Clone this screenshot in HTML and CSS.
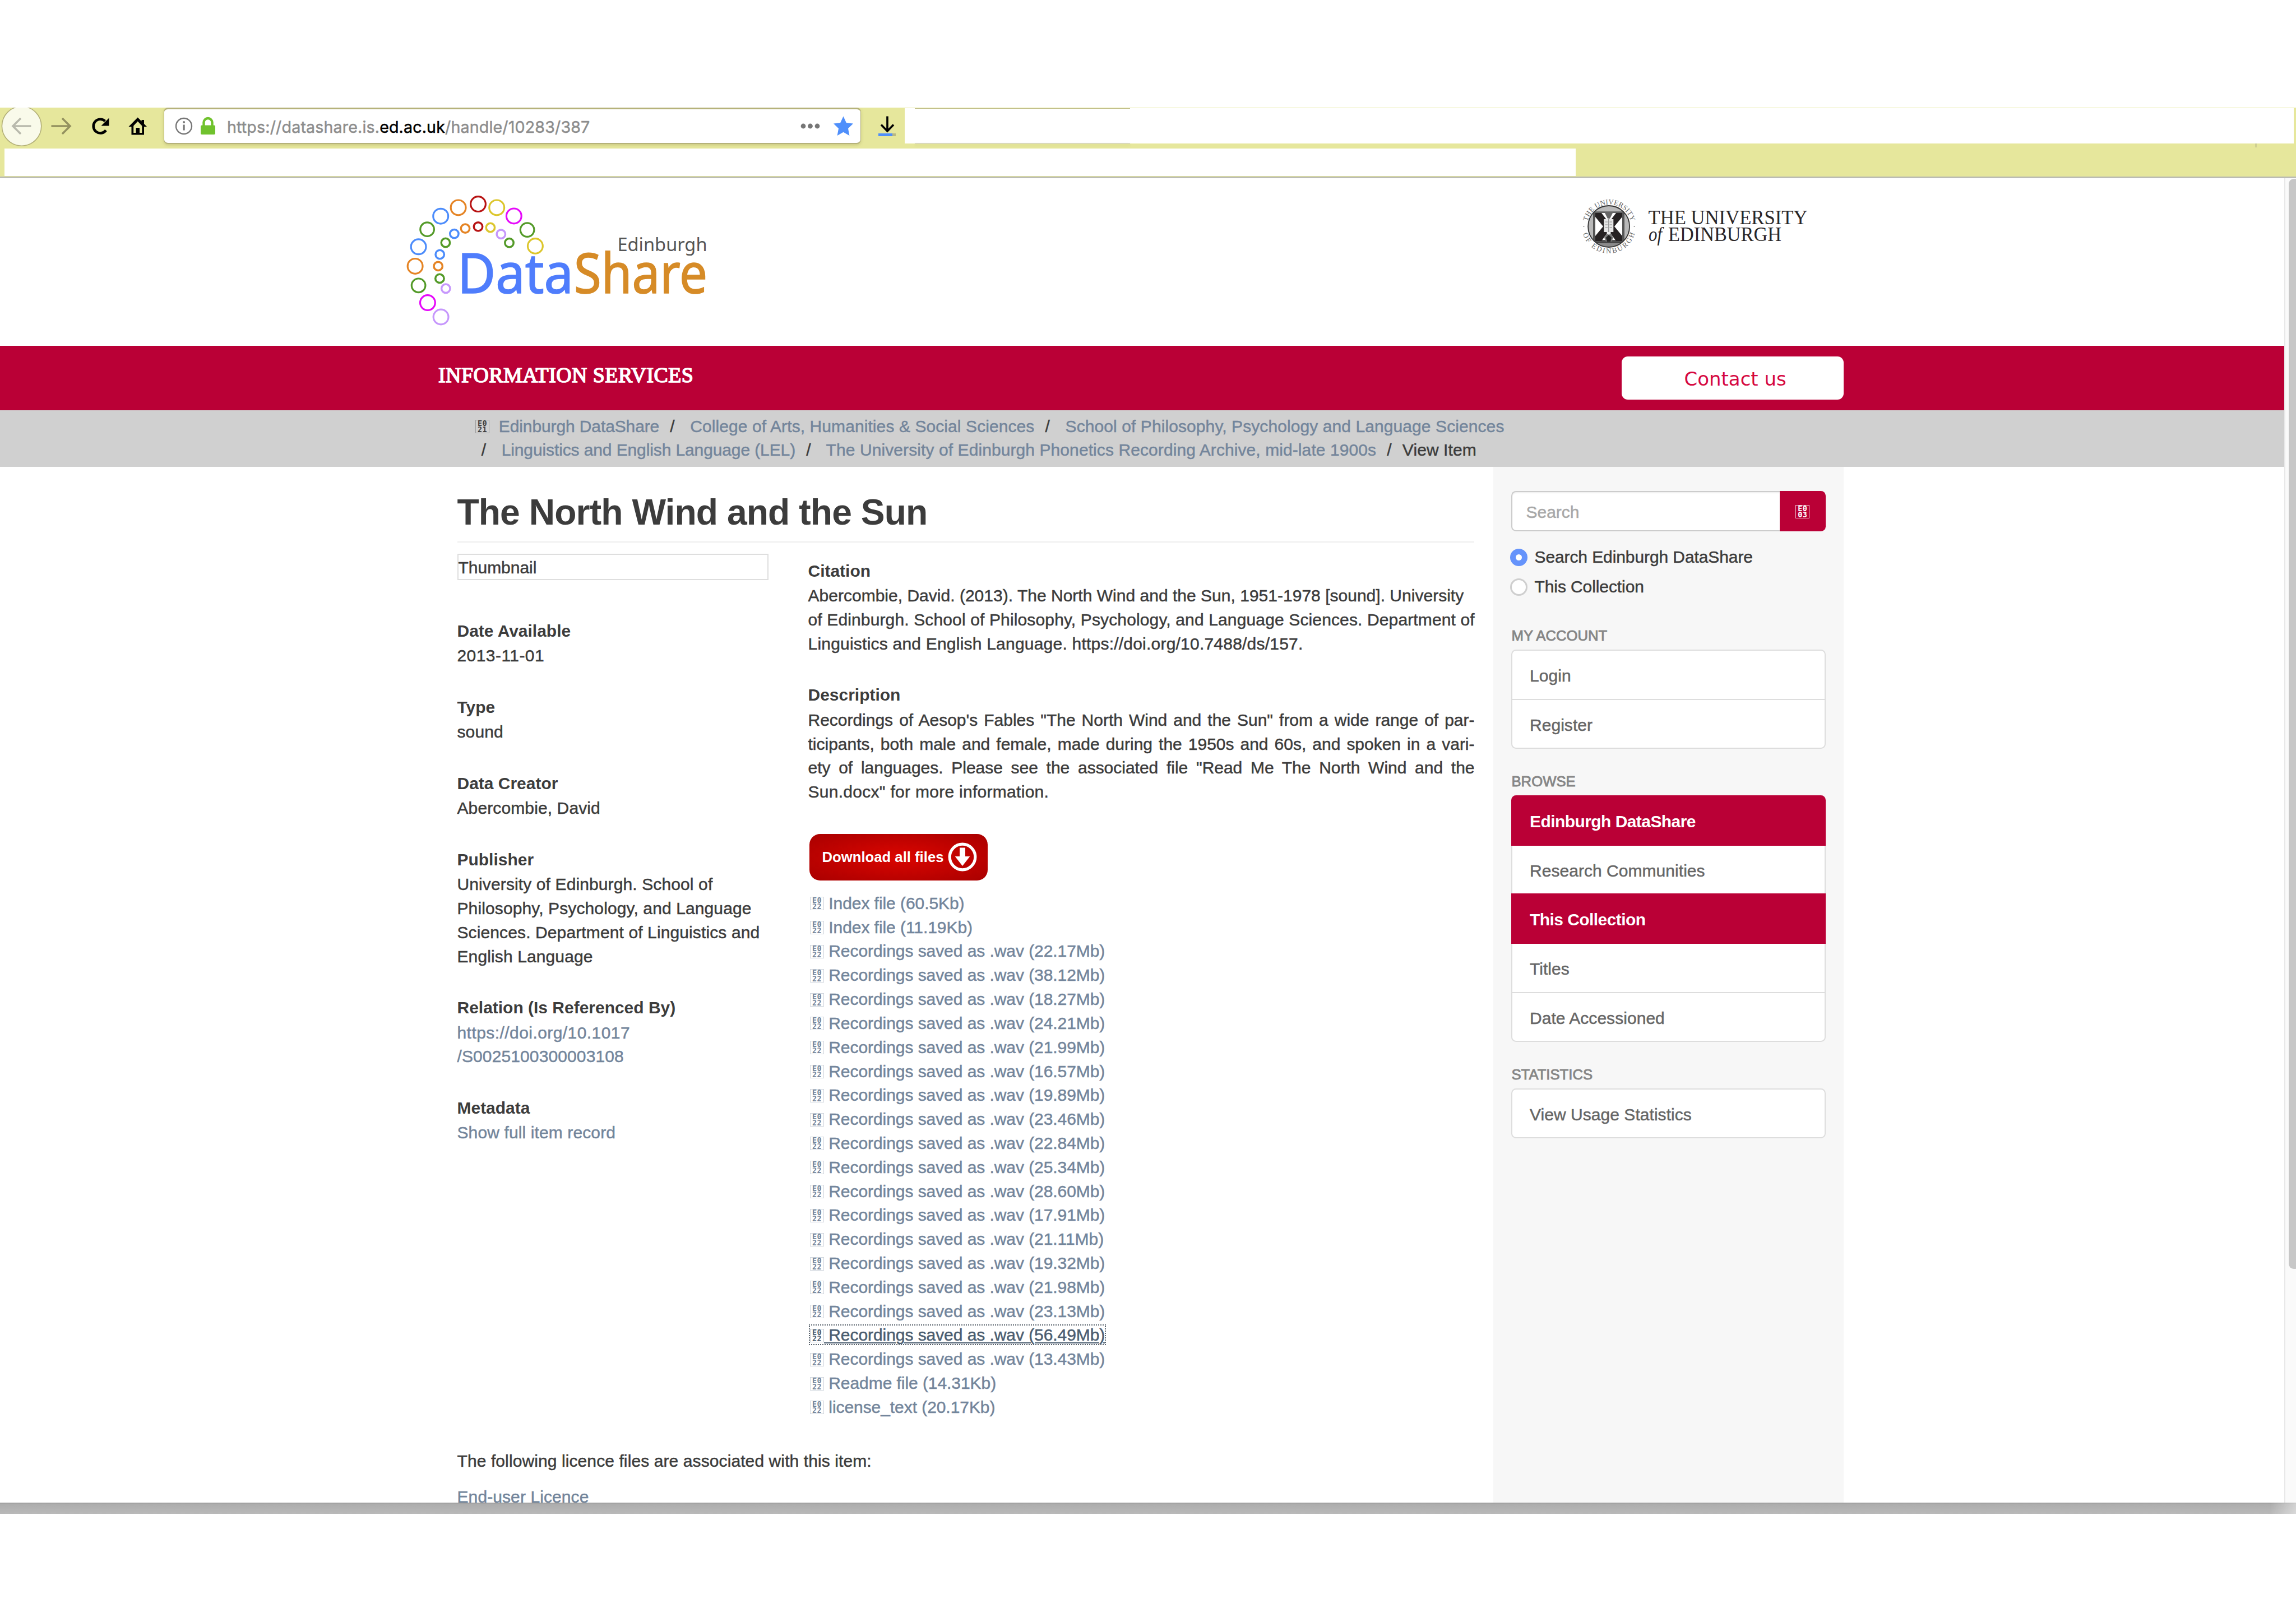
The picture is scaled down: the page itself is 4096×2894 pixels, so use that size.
FILE: index.html
```html
<!DOCTYPE html>
<html lang="en">
<head>
<meta charset="utf-8">
<title>The North Wind and the Sun</title>
<link rel="stylesheet" href="styles.css">
</head>
<body>
<div class="window">
  <div class="toolbar">
    <div class="nav-row">
      <svg class="nav-icons" viewBox="0 0 292 72" aria-hidden="true">
        <circle cx="38.6" cy="33" r="35.2" fill="#f9faea" stroke="#b3b078" stroke-width="1.6"/>
        <path d="M55.5 33H24M37 19L23 33L37 47" fill="none" stroke="#b9baad" stroke-width="3.6"/>
        <path d="M91.5 33H124M111 19L125 33L111 47" fill="none" stroke="#94925f" stroke-width="3.6"/>
        <path d="M189 40.5A12.4 12.4 0 1 1 187.5 24" fill="none" stroke="#000" stroke-width="4.6"/>
        <path d="M194.500 18.500V32.500H180.500Z" fill="#000"/>
        <path d="M245.700 17.500L229.500 34H234.500V48.500H257V34H262L257 29V22H252.500V24.500Z" fill="#000"/>
        <path d="M238.200 45V32.500L245.700 24.500L253.300 32.500V45H249V36H242.500V45Z" fill="#e6e79c"/>
      </svg>
      <div class="url-field">
        <svg class="url-icons" viewBox="0 0 76 34" aria-hidden="true">
          <circle cx="17" cy="17" r="14" fill="none" stroke="#777" stroke-width="2.4"/>
          <rect x="15.500" y="14.500" width="3.200" height="10" fill="#777"/><circle cx="17.100" cy="10" r="2" fill="#777"/>
          <rect x="47" y="15.500" width="26" height="16.500" rx="2" fill="#70c22d"/>
          <path d="M52.500 17V10.500A7.500 7.500 0 0 1 67.500 10.500V17" fill="none" stroke="#70c22d" stroke-width="4.400"/>
        </svg>
        <span class="url">https://datashare.is.<b>ed.ac.uk</b>/handle/10283/387</span>
        <svg class="url-end" viewBox="0 0 108 40" aria-hidden="true">
          <circle cx="6" cy="20" r="4.400" fill="#767676"/><circle cx="18.500" cy="20" r="4.400" fill="#767676"/><circle cx="31" cy="20" r="4.400" fill="#767676"/>
          <path transform="translate(1 1)" d="M76.500 1.500L81.800 13L94 14.600L85 23.200L87.400 36L76.500 29.800L65.600 36L68 23.200L59 14.600L71.200 13Z" fill="#4f8ffb"/>
        </svg>
      </div>
      <svg class="dl-icon" viewBox="0 0 32 40" aria-hidden="true">
        <path d="M16 1.500V26M5 16.500L16 28L27 16.500" fill="none" stroke="#000" stroke-width="3.600"/>
        <rect x="0" y="32" width="25" height="5" fill="#4f8ffb"/><rect x="25" y="32" width="6" height="5" fill="#b8b883"/>
      </svg>
      <div class="blank-box"></div>
    </div>
    <div class="bookmark-row"></div>
  </div>

  <div class="viewport">
    <div class="page">
      <header class="masthead">
        <svg class="logo" viewBox="720 340 550 250" role="img" aria-label="Edinburgh DataShare">
          <g fill="none" stroke-width="3.200">
            <circle cx="853" cy="364.100" r="13.400" stroke="#b81414"/><circle cx="817.600" cy="370.400" r="13.400" stroke="#e58424"/>
            <circle cx="886.200" cy="370.400" r="13.400" stroke="#dcc62c"/><circle cx="786.200" cy="385.700" r="13.400" stroke="#4c8cfb"/>
            <circle cx="916.800" cy="385.400" r="13.400" stroke="#e60afa"/><circle cx="762.100" cy="409.200" r="12.300" stroke="#539a28"/>
            <circle cx="940.600" cy="410.100" r="12.300" stroke="#539a28"/><circle cx="746.600" cy="440.300" r="13.400" stroke="#4c8cfb"/>
            <circle cx="954.900" cy="439" r="13.400" stroke="#dcc62c"/><circle cx="740.600" cy="474.900" r="13.400" stroke="#e58424"/>
            <circle cx="746.600" cy="509.300" r="12.300" stroke="#539a28"/><circle cx="762.900" cy="540.100" r="13.400" stroke="#e60afa"/>
            <circle cx="786.600" cy="565.500" r="13.400" stroke="#c697fc"/>
          </g>
          <g fill="none" stroke-width="3.500">
            <circle cx="853" cy="404.400" r="7.700" stroke="#b81414"/><circle cx="830" cy="407.600" r="7.700" stroke="#e58424"/>
            <circle cx="874.900" cy="406" r="7.700" stroke="#dcc62c"/><circle cx="810.400" cy="417.100" r="7.700" stroke="#4c8cfb"/>
            <circle cx="893.800" cy="417.800" r="7.700" stroke="#c697fc"/><circle cx="794.900" cy="433" r="7.700" stroke="#539a28"/>
            <circle cx="908.500" cy="433.300" r="7.700" stroke="#539a28"/><circle cx="784.700" cy="454" r="7.700" stroke="#4c8cfb"/>
            <circle cx="781.700" cy="474.900" r="7.700" stroke="#e58424"/><circle cx="784.400" cy="496.900" r="7.700" stroke="#539a28"/>
            <circle cx="795.300" cy="514.700" r="7.700" stroke="#c697fc"/>
          </g>
          <text class="logo-small" x="1101.500" y="447.900" textLength="160" lengthAdjust="spacingAndGlyphs">Edinburgh</text>
          <text class="logo-data" x="816" y="523" textLength="207" lengthAdjust="spacingAndGlyphs">Data</text>
          <text class="logo-share" x="1024" y="523" textLength="238" lengthAdjust="spacingAndGlyphs">Share</text>
        </svg>
        <svg class="university" viewBox="2815 350 420 110" role="img" aria-label="The University of Edinburgh">
          <defs>
            <path id="arc-top" d="M2831.100 404A39.500 39.500 0 0 1 2910.100 404"/>
            <path id="arc-bottom" d="M2822.100 404A48 48 0 0 0 2918.100 404"/>
            <clipPath id="disc"><circle cx="2870.100" cy="404" r="37"/></clipPath>
          </defs>
          <circle cx="2870.100" cy="404" r="37" fill="#b9b9b9"/>
          <g clip-path="url(#disc)">
            <rect x="2840" y="377" width="60" height="4" fill="#777"/>
            <rect x="2842" y="379" width="56" height="52" fill="#555"/>
            <rect x="2846" y="380" width="48" height="48" fill="#fff"/>
            <path d="M2846 380H2857L2870 397L2883 380H2894V387L2880 404L2894 421V430H2883L2870 412L2857 430H2846V421L2860 404L2846 387Z" fill="#262223"/>
            <path d="M2862 378H2878L2872 390H2868Z" fill="#666"/>
            <path d="M2870 411L2878 424L2874 434H2866L2862 424Z" fill="#777"/>
            <circle cx="2870" cy="415" r="3.500" fill="#eee"/>
            <path d="M2865 424L2870 419L2875 424L2873 431H2867Z" fill="#222"/>
            <rect x="2844" y="431" width="52" height="3" fill="#444"/>
            <path d="M2846 434H2894L2882 442H2858Z" fill="#8a8a8a"/>
          </g>
          <rect x="2861.300" y="391" width="17" height="23" fill="#e6e6e6"/>
          <path d="M2869.800 391V414M2863.500 396H2868M2863.500 401H2868M2863.500 406H2868M2871.500 396H2876M2871.500 401H2876M2871.500 406H2876" stroke="#888" stroke-width="1.200"/>
          <circle cx="2870.100" cy="404" r="37" fill="none" stroke="#333" stroke-width="1.800"/>
          <text class="ring"><textPath href="#arc-top" startOffset="9" textLength="106">THE UNIVERSITY</textPath></text>
          <text class="ring"><textPath href="#arc-bottom" startOffset="13" textLength="125">OF EDINBURGH</textPath></text>
          <circle cx="2825.500" cy="404" r="1" fill="#888"/><circle cx="2915.500" cy="404" r="1" fill="#888"/>
          <text class="uni" x="2940.500" y="399.600" textLength="284" lengthAdjust="spacingAndGlyphs">THE UNIVERSITY</text>
          <text class="uni uni-of" x="2941" y="430.200" textLength="24" lengthAdjust="spacingAndGlyphs">of</text>
          <text class="uni" x="2976" y="430.200" textLength="202" lengthAdjust="spacingAndGlyphs">EDINBURGH</text>
        </svg>
      </header>

      <div class="banner">
        <span class="banner-title">INFORMATION SERVICES</span>
        <a class="contact">Contact us</a>
      </div>

      <div class="trail">
        <ul class="breadcrumb">
          <li><i class="glyph">E0<br>21</i>&nbsp; <a class="tight">Edinburgh DataShare</a></li>
          <li> <a>College of Arts, Humanities &amp; Social Sciences</a></li>
          <li> <a>School of Philosophy, Psychology and Language Sciences</a></li>
          <li> <a class="tight">Linguistics and English Language (LEL)</a></li>
          <li> <a>The University of Edinburgh Phonetics Recording Archive, mid-late 1900s</a></li>
          <li>View Item</li>
        </ul>
      </div>

      <div class="body">
        <main class="content">
          <h2>The North Wind and the Sun</h2>
          <div class="item">
            <div class="meta">
              <div class="thumb">Thumbnail</div>
              <section><h5>Date Available</h5><p class="loose">2013-11-01</p></section>
              <section><h5>Type</h5><p>sound</p></section>
              <section><h5>Data Creator</h5><p>Abercombie, David</p></section>
              <section><h5>Publisher</h5><p>University of Edinburgh. School of<br>Philosophy, Psychology, and Language<br>Sciences. Department of Linguistics and<br>English Language</p></section>
              <section><h5>Relation (Is Referenced By)</h5><p><a><span class="loose">https://doi.org/10.1017</span><br>/S0025100300003108</a></p></section>
              <section><h5>Metadata</h5><p><a>Show full item record</a></p></section>
            </div>
            <div class="detail">
              <section class="citation"><h5>Citation</h5><p>Abercombie, David. (2013). The North Wind and the Sun, 1951-1978 [sound]. University<br><span>of Edinburgh. School of Philosophy, Psychology, and Language Sciences. Department of</span><br><span>Linguistics and English Language. https://doi.org/10.7488/ds/157.</span></p></section>
              <section><h5>Description</h5><p><span class="full">Recordings of Aesop's Fables "The North Wind and the Sun" from a wide range of par-</span><span class="full">ticipants, both male and female, made during the 1950s and 60s, and spoken in a vari-</span><span class="full">ety of languages. Please see the associated file "Read Me The North Wind and the</span><span class="last-line">Sun.docx" for more information.</span></p></section>
              <a class="download">Download all files
                <svg viewBox="0 0 52 52" aria-hidden="true"><circle cx="26" cy="26" r="22.800" fill="none" stroke="#fff" stroke-width="5.200"/><path d="M21 9.500H31V25H39.300L26 42L12.700 25H21Z" fill="#fff"/></svg>
              </a>
              <ul class="files">
                <li><a><i class="glyph">E0<br>22</i> Index file (60.5Kb)</a></li>
                <li><a><i class="glyph">E0<br>22</i> Index file (11.19Kb)</a></li>
                <li><a><i class="glyph">E0<br>22</i> Recordings saved as .wav (22.17Mb)</a></li>
                <li><a><i class="glyph">E0<br>22</i> Recordings saved as .wav (38.12Mb)</a></li>
                <li><a><i class="glyph">E0<br>22</i> Recordings saved as .wav (18.27Mb)</a></li>
                <li><a><i class="glyph">E0<br>22</i> Recordings saved as .wav (24.21Mb)</a></li>
                <li><a><i class="glyph">E0<br>22</i> Recordings saved as .wav (21.99Mb)</a></li>
                <li><a><i class="glyph">E0<br>22</i> Recordings saved as .wav (16.57Mb)</a></li>
                <li><a><i class="glyph">E0<br>22</i> Recordings saved as .wav (19.89Mb)</a></li>
                <li><a><i class="glyph">E0<br>22</i> Recordings saved as .wav (23.46Mb)</a></li>
                <li><a><i class="glyph">E0<br>22</i> Recordings saved as .wav (22.84Mb)</a></li>
                <li><a><i class="glyph">E0<br>22</i> Recordings saved as .wav (25.34Mb)</a></li>
                <li><a><i class="glyph">E0<br>22</i> Recordings saved as .wav (28.60Mb)</a></li>
                <li><a><i class="glyph">E0<br>22</i> Recordings saved as .wav (17.91Mb)</a></li>
                <li><a><i class="glyph">E0<br>22</i> Recordings saved as .wav (21.11Mb)</a></li>
                <li><a><i class="glyph">E0<br>22</i> Recordings saved as .wav (19.32Mb)</a></li>
                <li><a><i class="glyph">E0<br>22</i> Recordings saved as .wav (21.98Mb)</a></li>
                <li><a><i class="glyph">E0<br>22</i> Recordings saved as .wav (23.13Mb)</a></li>
                <li><a class="focused"><i class="glyph">E0<br>22</i><span class="underlined">&nbsp;Recordings saved as .wav (56.49Mb)</span></a></li>
                <li><a><i class="glyph">E0<br>22</i> Recordings saved as .wav (13.43Mb)</a></li>
                <li><a><i class="glyph">E0<br>22</i> Readme file (14.31Kb)</a></li>
                <li><a><i class="glyph">E0<br>22</i> license_text (20.17Kb)</a></li>
              </ul>
            </div>
          </div>
          <p class="licence">The following licence files are associated with this item:</p>
          <p class="licence-link"><a>End-user Licence</a></p>
        </main>

        <aside class="sidebar">
          <div class="search">
            <div class="search-input">Search</div>
            <div class="search-button"><i class="glyph">E0<br>03</i></div>
          </div>
          <div class="radio"><span class="dot dot-on"></span>Search Edinburgh DataShare</div>
          <div class="radio"><span class="dot"></span>This Collection</div>
          <h6 class="first">My Account</h6>
          <div class="group"><a>Login</a><a>Register</a></div>
          <h6>Browse</h6>
          <div class="group"><a class="active">Edinburgh DataShare</a><a>Research Communities</a><a class="active">This Collection</a><a>Titles</a><a>Date Accessioned</a></div>
          <h6>Statistics</h6>
          <div class="group"><a>View Usage Statistics</a></div>
        </aside>
      </div>
    </div>
    <div class="scrollbar"><div class="scroll-thumb"></div></div>
  </div>
  <div class="window-shadow"></div>
</div>
</body>
</html>
```

FILE: styles.css
```css
* { box-sizing: border-box; }

body {
  margin: 0;
  background: #fff;
  color: #3c3c3c;
  font: 29.98px/42.82px "Liberation Sans", Arial, sans-serif;
  -webkit-text-stroke: .5px currentColor;
}

p, h2, h5, h6, ul { margin: 0; padding: 0; }
h2, h5 { -webkit-text-stroke: 0; }
ul { list-style: none; }
a { color: #73859b; }

/* Fallback box for icon-font code points */
.glyph {
  display: inline-block;
  width: 25px;
  height: 24px;
  overflow: hidden;
  border: 1.6px solid color-mix(in srgb, currentColor 35%, transparent);
  font: bold 13.500px/11px "DejaVu Sans Mono", "Liberation Mono", monospace;
  letter-spacing: .300px;
  text-align: center;
  vertical-align: -2.500px;
  -webkit-text-stroke: 0;
}

.window {
  width: 4096px;
  height: 2894px;
  padding-top: 192.3px;
  overflow: hidden;
}

/* Browser chrome */
.toolbar {
  height: 125.3px;
  background: #e6e79c;
  border-bottom: 3px solid #bbbcb4;
}
.nav-row { display: flex; height: 72.3px; overflow: hidden; }
.nav-icons { width: 292px; height: 72px; flex: none; }
.url-field {
  display: flex;
  align-items: center;
  width: 1244px;
  height: 65px;
  flex: none;
  padding-left: 18px;
  background: #fff;
  border: 1.5px solid #b5b27a;
  border-top: 3px solid #b5b27a;
  border-bottom-width: 2px;
  border-radius: 8px;
  box-shadow: 0 2px 5px rgba(150, 145, 80, .35);
}
.url-icons { width: 76px; height: 34px; }
.url {
  margin-left: 18px;
  padding-top: 4px;
  color: #8d8d8d;
  font: 28.600px/36px Inter, sans-serif;
  letter-spacing: .150px;
  white-space: nowrap;
}
.url b { color: #000; font-weight: 400; }
.url-end { width: 108px; height: 40px; margin-left: auto; }
.dl-icon { width: 32px; height: 40px; margin: 14px 15px 0 31px; flex: none; }
.blank-box {
  position: relative;
  width: 2478.2px;
  height: 63px;
  margin-top: 1px;
  background: #fff;
}
/* Edges of the hidden search field and menu divider */
.blank-box::before {
  content: "";
  position: absolute;
  left: 18px;
  bottom: -1px;
  width: 384px;
  height: 1px;
  background: #bdbb80;
  box-shadow: 0 -63px #bdbb80, 0 2px 4px rgba(150, 145, 80, .3);
}
.blank-box::after {
  content: "";
  position: absolute;
  right: 66px;
  bottom: -7px;
  width: 3px;
  height: 7px;
  background: #cfcf92;
}
.bookmark-row { width: 2802.700px; height: 49.7px; margin-left: 8.3px; background: #fff; }

/* Page viewport and scrollbar */
.viewport { display: flex; height: 2363px; overflow: hidden; }
.page { width: 4074.700px; flex: none; }
.scrollbar {
  flex: 1;
  padding: 1px 0 0 6.5px;
  background: #fafafa;
  border-left: 2.500px solid #e8e8e8;
}
.scroll-thumb { width: 20px; height: 1945px; border-radius: 9px; background: #c7c7c7; }
.window-shadow {
  height: 20px;
  background: linear-gradient(to right, transparent 4050px, rgba(255, 255, 255, .45)), linear-gradient(#9a9a9a, #adadad 3px, #b9b9b9);
}

.masthead {
  display: flex;
  justify-content: space-between;
  height: 299px;
  padding: 22.400px 839.700px 0 720px;
}
.logo { width: 550px; height: 250px; }
.university { width: 420px; height: 110px; margin-top: 10px; }
.logo text { font-family: "Noto Sans", "Open Sans", sans-serif; }
.logo .logo-small { font-size: 32px; fill: #555; stroke: none; }
.logo .logo-data { font-size: 98px; fill: #4f7dfc; stroke: #4f7dfc; stroke-width: 1.600; }
.logo .logo-share { font-size: 98px; fill: #d68b27; stroke: #d68b27; stroke-width: 1.600; }
.university text { font-family: "Liberation Serif", serif; }
.university .uni { font-size: 36px; fill: #2a2627; }
.university .uni-of { font-style: italic; }
.university .ring { font-size: 13px; fill: #666; }

.banner {
  display: flex;
  justify-content: space-between;
  height: 115.700px;
  padding: 19.600px 785.500px 0 782px;
  background: #ba0036;
  color: #fff;
}
.banner-title {
  padding-top: 11px;
  font: 37.800px/44px "Liberation Serif", serif;
  letter-spacing: .500px;
  -webkit-text-stroke: 1.600px #fff;
}
.contact {
  width: 396.200px;
  height: 77.300px;
  border-radius: 11px;
  background: #fff;
  color: #d6083f;
  font: 34px/80px "DejaVu Sans", sans-serif;
  text-align: center;
  text-indent: 9px;
  -webkit-text-stroke: 0;
}

.trail { height: 100.900px; padding: 7.300px 0 0 848px; background: #d0d0d0; }
.breadcrumb { width: 1880px; letter-spacing: .100px; }
.breadcrumb li { display: inline-block; white-space: pre; }
.breadcrumb li + li::before { content: "/\00a0"; padding: 0 10.700px; }
.breadcrumb .tight { letter-spacing: -.100px; }

/* Item page */
.body { display: flex; height: 1848px; }
.content { width: 1848.700px; margin-left: 815.500px; flex: none; }
h2 {
  width: 1814.500px;
  height: 135px;
  padding-top: 46px;
  border-bottom: 2.100px solid #eee;
  font-size: 64.200px;
  line-height: 71px;
  letter-spacing: -.9px;
}
.item { display: flex; height: 1563.700px; padding-top: 19.500px; }
.meta { width: 555px; margin-right: 71px; flex: none; }
.meta p { letter-spacing: .130px; }
.meta .loose { letter-spacing: .450px; }
.thumb {
  height: 47px;
  margin-bottom: 73.900px;
  border: 2px solid #dedede;
  line-height: 46.500px;
}
.detail { width: 1189px; padding-top: 13.900px; }
section { margin-bottom: 52.600px; }
h5 { margin-bottom: 7.600px; font-size: 29.980px; line-height: 33px; }
.citation p { letter-spacing: .030px; white-space: nowrap; }
.citation span { letter-spacing: .150px; }
.citation span:last-child { letter-spacing: .230px; }
.full { display: block; text-align-last: justify; white-space: nowrap; }
.last-line { letter-spacing: .300px; }
.download {
  display: flex;
  align-items: center;
  width: 318.500px;
  height: 83.600px;
  margin: 0 0 19.600px 2px;
  padding-left: 23px;
  border-radius: 19px;
  background: radial-gradient(ellipse at center, #db0500, #a90000);
  color: #fff;
  font-size: 25.700px;
  font-weight: 700;
  -webkit-text-stroke: 0;
}
.download svg { width: 52px; height: 52px; margin-left: 8px; }
.files { padding-left: 3.500px; letter-spacing: -.050px; white-space: nowrap; }
.files li { height: 42.820px; }
.focused { color: #4b5d70; outline: 2px dotted #56606a; }
.underlined { text-decoration: underline; text-decoration-thickness: 2px; text-underline-offset: 3px; }
.licence { margin-top: 54.600px; letter-spacing: .110px; }
.licence-link { margin-top: 20.900px; letter-spacing: .110px; }

/* Sidebar */
.sidebar { width: 624.700px; padding: 43px 32px 0 32.300px; background: #f7f7f7; }
.search { display: flex; height: 72.300px; margin-bottom: 19px; }
.search-input {
  flex: 1;
  padding: 15px 0 0 24px;
  background: #fff;
  border: 2px solid #ccc;
  border-right: 0;
  border-radius: 8.500px 0 0 8.500px;
  box-shadow: inset 0 2px 2px rgba(0, 0, 0, .06);
  color: #a8a8a8;
}
.search-button {
  width: 81.700px;
  padding: 15px 0 0 28px;
  border-radius: 0 8.500px 8.500px 0;
  background: #ba0036;
  color: #fff;
}
.search-button .glyph { border-color: rgba(255, 255, 255, .75); }
.radio { display: flex; align-items: center; height: 53.600px; gap: 12px; letter-spacing: -.080px; }
.dot {
  width: 31px;
  height: 31px;
  margin-left: -2px;
  border: 3.500px solid #cfcfcf;
  border-radius: 50%;
  background: #fff;
}
.dot-on { border: 10.500px solid #6593fb; }
h6 {
  height: 47.500px;
  margin-top: 35px;
  color: #868686;
  font-size: 25.700px;
  font-weight: 400;
  line-height: 47px;
  text-transform: uppercase;
  -webkit-text-stroke: .9px #868686;
}
h6.first { margin-top: 36.800px; }
.group { border-radius: 8.500px; }
.group a {
  display: block;
  height: 89.700px;
  padding: 24px 0 0 30.500px;
  background: #fff;
  border: 2px solid #ddd;
  color: #666;
  letter-spacing: .060px;
}
.group a + a { margin-top: -2px; }
.group a:first-child { border-top-left-radius: 8.500px; border-top-right-radius: 8.500px; }
.group a:last-child { border-bottom-left-radius: 8.500px; border-bottom-right-radius: 8.500px; }
.group .active {
  position: relative;
  background: #ba0036;
  border-color: #ba0036;
  color: #fff;
  font-weight: 700;
  letter-spacing: -.550px;
  -webkit-text-stroke: 0;
}
```
